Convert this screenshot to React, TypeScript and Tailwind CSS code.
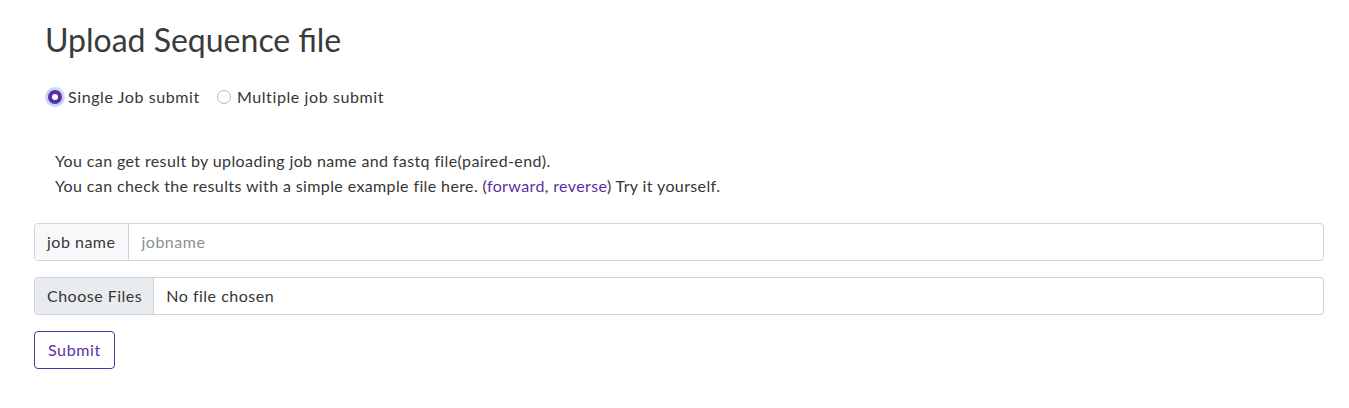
import { useState } from "react";

const font = { fontFamily: "Lato, 'Noto Sans', sans-serif" };

const Radio = ({
  checked,
  label,
  onClick
}: {
  checked: boolean;
  label: string;
  onClick: () => void;
}) => (
  <label className="flex items-center gap-[6px] cursor-pointer" onClick={onClick}>
    {checked ? (
      <span className="w-[14px] h-[14px] rounded-full bg-[#5b2ea6] ring-[3px] ring-[#c7d7fb] flex items-center justify-center">
        <span className="w-[6px] h-[6px] rounded-full bg-white" />
      </span>
    ) : (
      <span className="w-[14px] h-[14px] rounded-full border border-[#b8b8b8] bg-white" />
    )}
    <span>{label}</span>
  </label>
);

export default function App() {
  const [mode, setMode] = useState("single");

  return (
    <div className="w-[1349px] h-[408px] bg-white text-[#363636] pl-[34px] pr-[25px]" style={font}>
      <h2 className="text-[32px] leading-[38px] pt-[21px] ml-[11px] text-[#3a3a3a]">
        Upload Sequence file
      </h2>
      <div className="flex items-center gap-[17px] mt-[26px] ml-[14px] text-[16px] leading-[24px] tracking-[0.6px]">
        <Radio
          checked={mode === "single"}
          label="Single Job submit"
          onClick={() => setMode("single")}
        />
        <Radio
          checked={mode === "multiple"}
          label="Multiple job submit"
          onClick={() => setMode("multiple")}
        />
      </div>
      <div className="mt-[39px] ml-[21px] text-[16px] leading-[25px] tracking-[0.38px]">
        <p>You can get result by uploading job name and fastq file(paired-end).</p>
        <p>
          You can check the results with a simple example file here. (
          <a className="text-[#5b2ea6]" href="#">forward</a>,{" "}
          <a className="text-[#5b2ea6]" href="#">reverse</a>) Try it yourself.
        </p>
      </div>
      <div className="mt-[25px] flex h-[38px] border border-[#ced4da] rounded-[4px] overflow-hidden text-[16px] tracking-[0.5px]">
        <span className="pl-[12px] pr-[13px] flex items-center bg-[#f8f8fb] border-r border-[#ced4da]">
          job name
        </span>
        <input
          className="flex-1 px-[12px] outline-none tracking-[0.5px] placeholder:text-[#8a8f96]"
          placeholder="jobname"
          style={font}
        />
      </div>
      <div className="mt-[16px] flex h-[38px] border border-[#ced4da] rounded-[4px] overflow-hidden text-[16px] tracking-[0.5px]">
        <span className="pl-[12px] pr-[11px] flex items-center bg-[#e9ecef] border-r border-[#ced4da]">
          Choose Files
        </span>
        <span className="px-[12px] flex items-center">No file chosen</span>
      </div>
      <button className="mt-[16px] h-[38px] px-[13px] border border-[#5b2ea6] rounded-[4px] text-[#5b2ea6] text-[16px] tracking-[0.6px] bg-white">
        Submit
      </button>
    </div>
  );
}
